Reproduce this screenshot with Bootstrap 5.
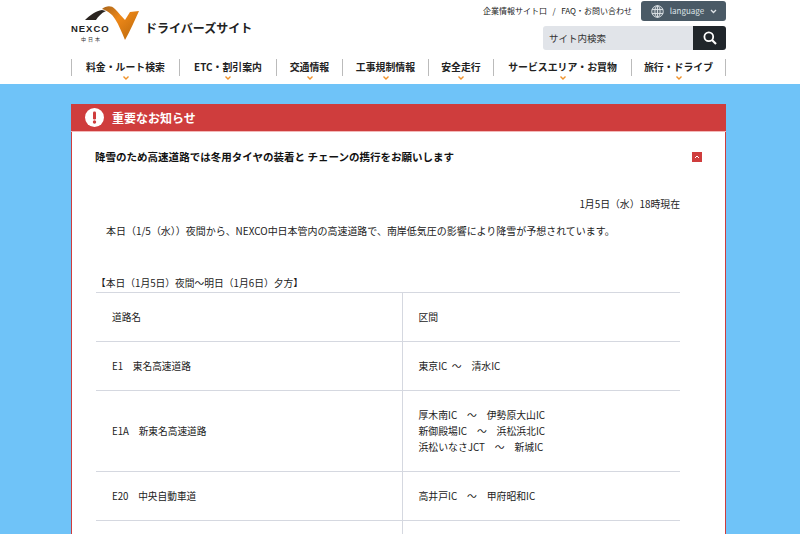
<!DOCTYPE html>
<html lang="ja">
<head>
<meta charset="utf-8">
<link href="https://cdn.jsdelivr.net/npm/bootstrap@5.3.0/dist/css/bootstrap.min.css" rel="stylesheet">
<style>
html,body{height:534px;overflow:hidden}
body{font-family:"Noto Sans CJK JP","Noto Sans",sans-serif;font-size:10px;color:#222;background:#6fc3f8;line-height:16px}
.site-head{background:#fff;height:84px}
.wrap-w{width:655px;margin-left:71px}
.brand-area{height:54px}
.logo-box{width:70px;height:42px;position:relative;margin-top:4px;align-self:flex-start}
.logo-name{position:absolute;left:0;top:20px;font:700 9.5px/10px "Liberation Sans",sans-serif;letter-spacing:.95px;color:#222}
.logo-sub{position:absolute;left:10px;top:31px;font-size:5px;line-height:7px;letter-spacing:2px;color:#333}
.site-title{font-weight:700;font-size:12px;margin-left:1px;margin-top:2px;color:#222}
.top-links{font-size:8px;line-height:12px;height:12px;margin-top:5px;color:#222;margin-right:9px;word-spacing:1px}
.lang-btn{width:85px;height:20px;background:#4a5a66;color:#dfe4e8;border-radius:3px;font-size:8px;margin-top:1px;padding:0 9px 0 10px}
.search-box{width:183px;height:24px;margin-top:5px}
.search-in{background:#e1e4e9;border-radius:3px 0 0 3px;padding-left:6px;font-size:9.5px;color:#333}
.search-go{width:33px;background:#20262b;border-radius:0 3px 3px 0}
.gnav{border-right:1px solid #bbb;height:17px;margin-top:5px}
.gitem{border-left:1px solid #bbb;height:17px;font-weight:700;font-size:9.9px;line-height:16px;color:#222;position:relative;white-space:nowrap}
.gitem:nth-child(1){width:108px}.gitem:nth-child(2){width:97px}.gitem:nth-child(3){width:66px}.gitem:nth-child(4){width:86px}.gitem:nth-child(5){width:65px}.gitem:nth-child(6){width:138px}.gitem:nth-child(7){width:94px}
.gitem svg{position:absolute;left:50%;margin-left:-3px;top:17px}
.alert-card{margin-top:20px;width:655px;height:500px;background:#fff;border:1px solid #cf3d3d;border-top:0;border-bottom:0}
.alert-bar{background:#cf3d3d;height:28px;margin:0 -1px;color:#fff;font-weight:700;font-size:12px;padding-left:14px;border-bottom:1px solid #f3b9b9}
.alert-bar span{margin-left:8px}
.headline{font-weight:700;font-size:10.52px;height:16px;margin:17px 23px 0 23px;color:#111}
.toggle-x{width:10px;height:10px;background:#cf3d3d}
.date-line{text-align:right;width:608px;margin-top:31px;color:#222;font-size:9.85px}
.intro-line{margin:11px 0 0 34px;color:#222;font-size:9.98px}
.tbl-cap{margin:38px 0 0 24px;height:13px;color:#222;line-height:13px;font-size:9.75px}
.road-tbl{width:584px;margin:2px 0 0 24px;table-layout:fixed;border-collapse:collapse;font-size:9.7px}
.road-tbl td{border-top:1px solid #d5d8e0;border-bottom:1px solid #d5d8e0;padding:0 16px;vertical-align:middle;height:49px;line-height:16px}
.road-tbl td:first-child{width:306px;border-right:1px solid #d5d8e0}
.road-tbl td+td{font-size:9.85px}
.road-tbl tr.tall td{height:81px}
</style>
</head>
<body>
<header class="site-head">
  <div class="wrap-w">
    <div class="brand-area d-flex justify-content-between">
      <div class="d-flex align-items-center">
        <div class="logo-box">
          <svg width="72" height="42" viewBox="71 4 72 42">
            <defs><linearGradient id="og" x1="0" y1="0" x2="1" y2="1"><stop offset="0" stop-color="#a8651c"/><stop offset=".4" stop-color="#ee8818"/><stop offset=".8" stop-color="#c8710f"/><stop offset="1" stop-color="#9a5410"/></linearGradient></defs>
            <path d="M85 20 C90 15 96 11 102 10 L106 11 C101 13 98 17 96 20Z" fill="#2a2420"/>
            <path d="M102 9 C106 6 111 5 115 9 C119 13 122 17 125 20 L130 12 L139 11 C135 20 130 31 125 40 C122 33 119 25 115 19 C112 14 108 11 102 9Z" fill="url(#og)"/>
          </svg>
          <div class="logo-name">NEXCO</div>
          <div class="logo-sub">中日本</div>
        </div>
        <div class="site-title ms-1">ドライバーズサイト</div>
      </div>
      <div class="d-flex flex-column align-items-end">
        <div class="d-flex">
          <div class="top-links">企業情報サイト口 &nbsp;/&nbsp; FAQ・お問い合わせ</div>
          <div class="lang-btn d-flex align-items-center justify-content-between">
            <svg width="13" height="13" viewBox="0 0 13 13" fill="none" stroke="#dfe4e8" stroke-width=".9"><circle cx="6.5" cy="6.5" r="5.8" fill="#dfe4e8" fill-opacity=".15"/><ellipse cx="6.5" cy="6.5" rx="2.6" ry="5.8"/><path d="M6.5.7v11.6M1 4.5h11M1 8.5h11"/></svg>
            <span>language</span>
            <svg width="7" height="5" viewBox="0 0 7 5" fill="none" stroke="#dfe4e8" stroke-width="1.3"><path d="M1 1l2.5 2.5L6 1"/></svg>
          </div>
        </div>
        <div class="search-box d-flex">
          <div class="search-in flex-grow-1 d-flex align-items-center">サイト内検索</div>
          <div class="search-go d-flex align-items-center justify-content-center">
            <svg width="14" height="14" viewBox="0 0 14 14" fill="none" stroke="#fff" stroke-width="1.8"><circle cx="5.8" cy="5.8" r="4.4"/><path d="M9 9l4 4" stroke-width="2.2"/></svg>
          </div>
        </div>
      </div>
    </div>
    <nav class="gnav d-flex">
      <div class="gitem text-center">料金・ルート検索<svg width="6" height="4" viewBox="0 0 6 4" fill="none" stroke="#f0922a" stroke-width="1.4"><path d="M.5.5L3 3 5.5.5"/></svg></div>
      <div class="gitem text-center">ETC・割引案内<svg width="6" height="4" viewBox="0 0 6 4" fill="none" stroke="#f0922a" stroke-width="1.4"><path d="M.5.5L3 3 5.5.5"/></svg></div>
      <div class="gitem text-center">交通情報<svg width="6" height="4" viewBox="0 0 6 4" fill="none" stroke="#f0922a" stroke-width="1.4"><path d="M.5.5L3 3 5.5.5"/></svg></div>
      <div class="gitem text-center">工事規制情報<svg width="6" height="4" viewBox="0 0 6 4" fill="none" stroke="#f0922a" stroke-width="1.4"><path d="M.5.5L3 3 5.5.5"/></svg></div>
      <div class="gitem text-center">安全走行<svg width="6" height="4" viewBox="0 0 6 4" fill="none" stroke="#f0922a" stroke-width="1.4"><path d="M.5.5L3 3 5.5.5"/></svg></div>
      <div class="gitem text-center">サービスエリア・お買物<svg width="6" height="4" viewBox="0 0 6 4" fill="none" stroke="#f0922a" stroke-width="1.4"><path d="M.5.5L3 3 5.5.5"/></svg></div>
      <div class="gitem text-center">旅行・ドライブ<svg width="6" height="4" viewBox="0 0 6 4" fill="none" stroke="#f0922a" stroke-width="1.4"><path d="M.5.5L3 3 5.5.5"/></svg></div>
    </nav>
  </div>
</header>
<main class="wrap-w alert-card">
  <div class="alert-bar d-flex align-items-center">
    <svg width="19" height="19" viewBox="0 0 19 19"><circle cx="9.5" cy="9.5" r="9.5" fill="#fff"/><rect x="8" y="3.5" width="3" height="8" rx="1.2" fill="#cf3d3d"/><circle cx="9.5" cy="14" r="1.7" fill="#cf3d3d"/></svg>
    <span>重要なお知らせ</span>
  </div>
  <div class="headline d-flex justify-content-between align-items-center">
    <div>降雪のため高速道路では冬用タイヤの装着と チェーンの携行をお願いします</div>
    <div class="toggle-x d-flex align-items-center justify-content-center"><svg width="6" height="4" viewBox="0 0 6 4" fill="none" stroke="#fff" stroke-width="1"><path d="M1 3l2-2 2 2"/></svg></div>
  </div>
  <div class="date-line">1月5日（水）18時現在</div>
  <div class="intro-line">本日（1/5（水））夜間から、NEXCO中日本管内の高速道路で、南岸低気圧の影響により降雪が予想されています。</div>
  <div class="tbl-cap">【本日（1月5日）夜間～明日（1月6日）夕方】</div>
  <table class="road-tbl">
    <tr><td>道路名</td><td>区間</td></tr>
    <tr><td>E1&emsp;東名高速道路</td><td>東京IC &nbsp;～&emsp;清水IC</td></tr>
    <tr class="tall"><td>E1A&emsp;新東名高速道路</td><td>厚木南IC&emsp;～&emsp;伊勢原大山IC<br>新御殿場IC&emsp;～&emsp;浜松浜北IC<br>浜松いなさJCT&emsp;～&emsp;新城IC</td></tr>
    <tr><td>E20&emsp;中央自動車道</td><td>高井戸IC&emsp;～&emsp;甲府昭和IC</td></tr>
    <tr><td></td><td></td></tr>
  </table>
</main>
<script src="https://cdn.jsdelivr.net/npm/bootstrap@5.3.0/dist/js/bootstrap.bundle.min.js"></script>
</body>
</html>
